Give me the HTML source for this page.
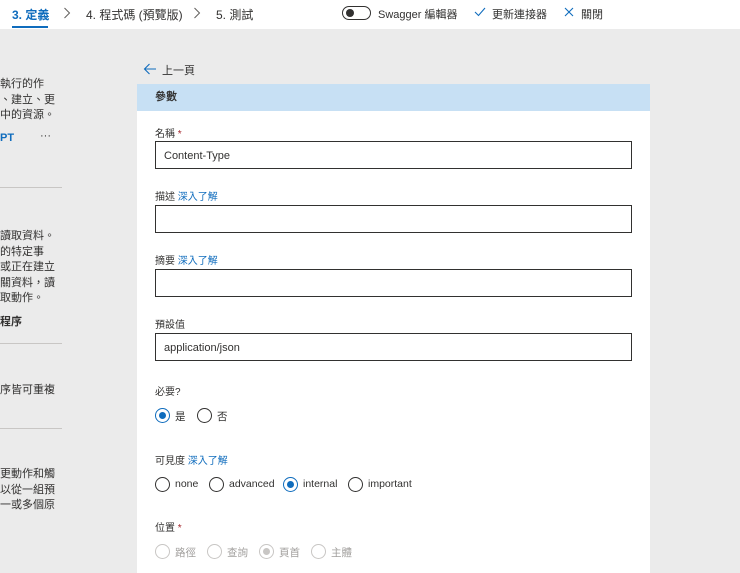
<!DOCTYPE html><html><head><meta charset="utf-8"><style>
body{margin:0;width:740px;height:573px;overflow:hidden;background:#ebebeb;font-family:"Liberation Sans","Noto Sans CJK TC",sans-serif;color:#323130;position:relative}
.a{position:absolute;white-space:nowrap}
.hdr{position:absolute;left:0;top:0;width:740px;height:29px;background:#fff}
.s{font-size:12px}
.lt{font-size:11px;line-height:15.5px}
.panel{position:absolute;left:137px;top:84px;width:513px;height:489px;background:#fff}
.ph{height:27px;background:#c7e0f4;font-size:11px;font-weight:bold;line-height:27px;padding-left:18px}
.lbl{font-size:10px;color:#323130}
.lnk{color:#0f6cbd}
.req{color:#a4262c}
.inp{position:absolute;left:155px;height:26px;border:1px solid #323130;background:#fff;font-size:11px;line-height:28px;padding-left:8px;box-sizing:content-box;width:467px}
.r{position:absolute;width:15px;height:15px;border:1px solid #323130;border-radius:50%;box-sizing:border-box}
.r.on{border-color:#0f6cbd}
.r.on::after{content:"";position:absolute;left:3px;top:3px;width:7px;height:7px;border-radius:50%;background:#0f6cbd}
.r.dis{border-color:#c8c6c4}
.r.dis.on::after{background:#c8c6c4}
.rt{font-size:10.5px}
.line{position:absolute;height:1px;background:#c8c6c4;left:0;width:62px}
</style></head><body>
<div class="hdr"></div>
<div class="a s" style="left:12px;top:6px;color:#0f6cbd;font-weight:bold">3. 定義</div>
<div style="position:absolute;left:12px;top:26px;width:36px;height:2px;background:#0f6cbd"></div>
<svg class="a" style="left:63px;top:7px" width="8" height="12"><path d="M1.5 1l5 5-5 5" fill="none" stroke="#605e5c" stroke-width="1"/></svg>
<div class="a s" style="left:86px;top:6px">4. 程式碼 (預覽版)</div>
<svg class="a" style="left:193px;top:7px" width="8" height="12"><path d="M1.5 1l5 5-5 5" fill="none" stroke="#605e5c" stroke-width="1"/></svg>
<div class="a s" style="left:216px;top:6px">5. 測試</div>
<div style="position:absolute;left:342px;top:6px;width:29px;height:14px;border:1px solid #323130;border-radius:8px;box-sizing:border-box"></div>
<div style="position:absolute;left:346px;top:9px;width:8px;height:8px;border-radius:50%;background:#323130"></div>
<div class="a" style="left:378px;top:6px;font-size:11px">Swagger 編輯器</div>
<svg class="a" style="left:474px;top:7px" width="12" height="10"><path d="M1 5l3.5 3.5L11 1" fill="none" stroke="#0f6cbd" stroke-width="1.1"/></svg>
<div class="a" style="left:492px;top:6px;font-size:11px">更新連接器</div>
<svg class="a" style="left:564px;top:7px" width="10" height="10"><path d="M1 1l8 8M9 1l-8 8" fill="none" stroke="#0f6cbd" stroke-width="1.1"/></svg>
<div class="a" style="left:581px;top:6px;font-size:11px">關閉</div>

<div class="a lt" style="left:0;top:77px">執行的作<br>、建立、更<br>中的資源。</div>
<div class="a" style="left:0;top:132px;font-size:11px;font-weight:bold;color:#0f6cbd">PT</div>
<div class="a" style="left:40px;top:130px;font-size:11px">···</div>
<div class="line" style="top:187px"></div>
<div class="a lt" style="left:0;top:229px">讀取資料。<br>的特定事<br>或正在建立<br>關資料，讀<br>取動作。</div>
<div class="a" style="left:0;top:313px;font-size:11px;font-weight:bold">程序</div>
<div class="line" style="top:343px"></div>
<div class="a lt" style="left:0;top:383px">序皆可重複</div>
<div class="line" style="top:428px"></div>
<div class="a lt" style="left:0;top:467px">更動作和觸<br>以從一組預<br>一或多個原</div>

<svg class="a" style="left:143px;top:63px" width="14" height="12"><path d="M13 6H1.5M6.5 1L1.5 6l5 5" fill="none" stroke="#0f6cbd" stroke-width="1.1"/></svg>
<div class="a" style="left:162px;top:62px;font-size:11px">上一頁</div>

<div class="panel"><div class="ph">參數</div></div>
<div class="a lbl" style="left:155px;top:125px">名稱 <span class="req">*</span></div>
<div class="inp" style="top:141px">Content-Type</div>
<div class="a lbl" style="left:155px;top:188px">描述 <span class="lnk">深入了解</span></div>
<div class="inp" style="top:205px"></div>
<div class="a lbl" style="left:155px;top:252px">摘要 <span class="lnk">深入了解</span></div>
<div class="inp" style="top:269px"></div>
<div class="a lbl" style="left:155px;top:316px">預設值</div>
<div class="inp" style="top:333px">application/json</div>
<div class="a lbl" style="left:155px;top:383px">必要?</div>
<div class="r on" style="left:155px;top:408px"></div><div class="a rt" style="left:175px;top:409px">是</div>
<div class="r" style="left:197px;top:408px"></div><div class="a rt" style="left:217px;top:409px">否</div>
<div class="a lbl" style="left:155px;top:452px">可見度 <span class="lnk">深入了解</span></div>
<div class="r" style="left:155px;top:477px"></div><div class="a rt" style="left:175px;top:478px">none</div>
<div class="r" style="left:209px;top:477px"></div><div class="a rt" style="left:229px;top:478px">advanced</div>
<div class="r on" style="left:283px;top:477px"></div><div class="a rt" style="left:303px;top:478px">internal</div>
<div class="r" style="left:348px;top:477px"></div><div class="a rt" style="left:368px;top:478px">important</div>
<div class="a lbl" style="left:155px;top:519px">位置 <span class="req">*</span></div>
<div class="r dis" style="left:155px;top:544px"></div><div class="a rt" style="left:175px;top:545px;color:#a19f9d">路徑</div>
<div class="r dis" style="left:207px;top:544px"></div><div class="a rt" style="left:227px;top:545px;color:#a19f9d">查詢</div>
<div class="r dis on" style="left:259px;top:544px"></div><div class="a rt" style="left:279px;top:545px;color:#a19f9d">頁首</div>
<div class="r dis" style="left:311px;top:544px"></div><div class="a rt" style="left:331px;top:545px;color:#a19f9d">主體</div>
</body></html>
